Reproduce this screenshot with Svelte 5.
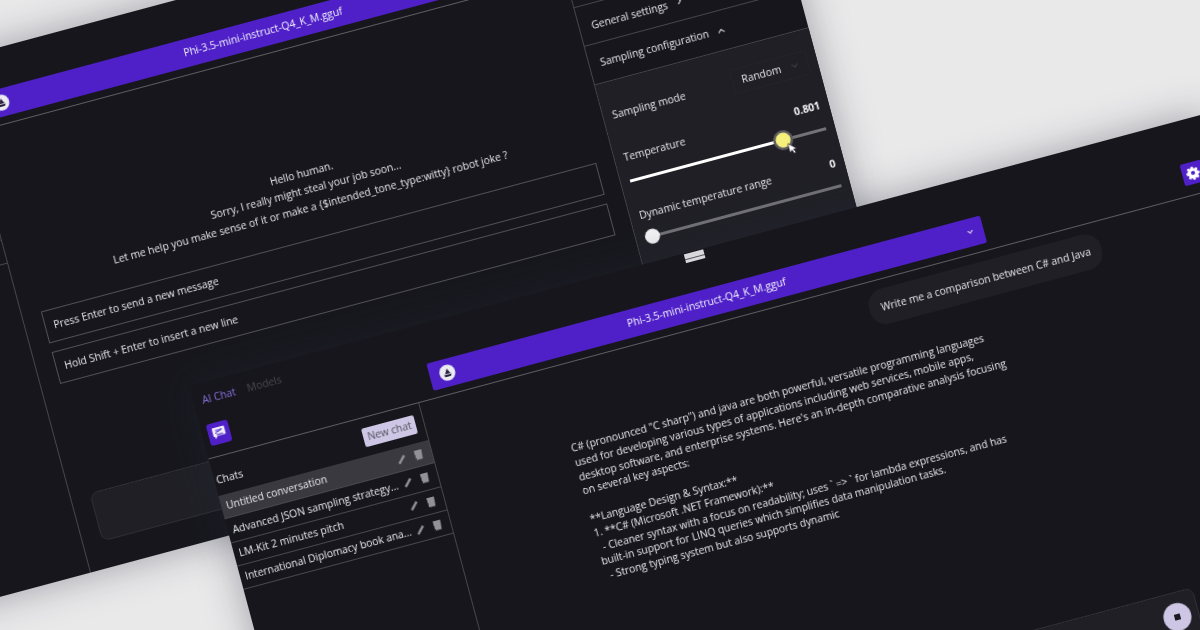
<script lang="ts">
    const MODEL = 'Phi-3.5-mini-instruct-Q4_K_M.gguf';

    const CHATS = [
        { name: 'Untitled conversation', active: true },
        { name: 'Advanced JSON sampling strategy...', active: false },
        { name: 'LM-Kit 2 minutes pitch', active: false },
        { name: 'International Diplomacy book ana...', active: false },
    ];

    const GREETING = [
        'Hello human.',
        'Sorry, I really might steal your job soon...',
        'Let me help you make sense of it or make a {$intended_tone_type:witty} robot joke ?',
    ];

    const ANSWER: [string, boolean?][] = [
        ['C# (pronounced "C sharp") and java are both powerful, versatile programming languages'],
        ['used for developing various types of applications including web services, mobile apps,'],
        ["desktop software, and enterprise systems. Here's an in-depth comparative analysis focusing"],
        ['on several key aspects:'],
        ['\u00a0'],
        ['**Language Design & Syntax:**'],
        ['1. **C# (Microsoft .NET Framework):**'],
        ['- Cleaner syntax with a focus on readability; uses ` => ` for lambda expressions, and has', true],
        ['built-in support for LINQ queries which simplifies data manipulation tasks.'],
        ['- Strong typing system but also supports dynamic', true],
    ];

    const TEMPERATURE = 0.801;
    const DYN_RANGE = 0;
</script>

{#snippet header()}
    <header class="header">
        <div class="brand">
            <nav class="tabs">
                <span class="tab active">AI Chat</span>
                <span class="tab">Models</span>
            </nav>
            <span class="chat-badge">
                <svg width="14" height="13" viewBox="0 0 14 13">
                    <path d="M1.5 1h11a.8.8 0 0 1 .8.8v7a.8.8 0 0 1-.8.8H5L2.2 12.4V10H1.5a.8.8 0 0 1-.8-.8v-7.4A.8.8 0 0 1 1.5 1z" fill="#f0eefa" />
                    <path d="M3 6.6 10.5 3.6M3.6 4h6.4M4 8.2h6.6" stroke="#4f20c8" stroke-width="1" fill="none" />
                </svg>
            </span>
        </div>
        <div class="head-main">
            <div class="model-bar">
                <span class="model-logo">
                    <svg width="10" height="10" viewBox="0 0 10 10">
                        <path d="M5.2 .8 8 6H2.6zM1 6.8h8L7.6 9H2.2z" fill="#2a2140" />
                    </svg>
                </span>
                <span class="model-name">{MODEL}</span>
                <svg class="model-chevron" width="7" height="5" viewBox="0 0 7 5">
                    <path d="M1 1.2 3.5 3.6 6 1.2" fill="none" stroke="#e6e2f8" stroke-width="1.1" />
                </svg>
            </div>
            <button class="gear" aria-label="Settings">
                <svg width="14" height="14" viewBox="0 0 14 14">
                    <path fill="#fff" fill-rule="evenodd" d="M5.9 .8h2.2l.3 1.7 1.1.5 1.4-1 1.6 1.6-1 1.4.5 1.1 1.7.3v2.2l-1.7.3-.5 1.1 1 1.4-1.6 1.6-1.4-1-1.1.5-.3 1.7H5.9l-.3-1.7-1.1-.5-1.4 1-1.6-1.6 1-1.4-.5-1.1-1.7-.3V5.9l1.7-.3.5-1.1-1-1.4 1.6-1.6 1.4 1 1.1-.5zM7 4.9a2.1 2.1 0 1 0 0 4.2 2.1 2.1 0 0 0 0-4.2z" />
                </svg>
            </button>
        </div>
    </header>
{/snippet}

{#snippet sidebar()}
    <aside class="sidebar">
        <div class="side-head">
            <span class="side-title">Chats</span>
            <button class="new-chat">New chat</button>
        </div>
        {#each CHATS as chat}
            <div class="chat-row" class:active={chat.active}>
                <span class="chat-name">{chat.name}</span>
                <svg class="row-icon" width="9" height="10" viewBox="0 0 9 10">
                    <path d="M1.2 8.6 7.8 1.6" fill="none" stroke="#8f8f94" stroke-width="2.4" />
                </svg>
                <svg class="row-icon" width="8" height="11" viewBox="0 0 8 11">
                    <path d="M.2 1h7.6v1.6l-.6 8H.8l-.6-8z" fill="#929296" />
                </svg>
            </div>
        {/each}
    </aside>
{/snippet}

{#snippet slider(value: number, hot: boolean)}
    <div class="slider">
        <div class="track"></div>
        <div class="fill" style="width: calc((100% - 15px) * {value} + 7.5px)"></div>
        <div class="thumb" class:hot style="left: calc((100% - 15px) * {value})"></div>
        {#if hot}
            <svg class="cursor" width="11" height="14" viewBox="0 0 11 14" style="left: calc((100% - 15px) * {value} + 10px)">
                <path d="M1 1v9.6l2.4-2 1.6 3.6 1.9-.8-1.6-3.5h3.2z" fill="#fff" stroke="#23232a" stroke-width=".7" />
            </svg>
        {/if}
    </div>
{/snippet}

<div class="page">
    <section class="window back">
        {@render header()}
        <div class="body">
            {@render sidebar()}
            <div class="main split">
                <div class="chat narrow">
                    <div class="greeting">
                        {#each GREETING as line}
                            <p>{line}</p>
                        {/each}
                    </div>
                    <div class="hint">Press Enter to send a new message</div>
                    <div class="hint">Hold Shift + Enter to insert a new line</div>
                    <div class="prompt"></div>
                </div>
                <aside class="settings">
                    <div class="set-top"></div>
                    <div class="set-row general">
                        <span>General settings</span>
                        <svg width="6" height="8" viewBox="0 0 6 8">
                            <path d="M1.5 1 4.5 4 1.5 7" fill="none" stroke="#c8c8cc" stroke-width="1.1" />
                        </svg>
                    </div>
                    <div class="set-row">
                        <span>Sampling configuration</span>
                        <svg width="8" height="6" viewBox="0 0 8 6">
                            <path d="M1 4.5 4 1.5 7 4.5" fill="none" stroke="#c8c8cc" stroke-width="1.1" />
                        </svg>
                    </div>
                    <div class="set-body">
                        <div class="mode">
                            <span class="mode-label">Sampling mode</span>
                            <div class="select">
                                <span>Random</span>
                                <svg width="8" height="5" viewBox="0 0 8 5">
                                    <path d="M1 1 4 4 7 1" fill="none" stroke="#3c3c43" stroke-width="1.1" />
                                </svg>
                            </div>
                        </div>
                        <div class="param first">
                            <span>Temperature</span>
                            <b>{TEMPERATURE}</b>
                        </div>
                        {@render slider(TEMPERATURE, true)}
                        <div class="param">
                            <span>Dynamic temperature range</span>
                            <b>{DYN_RANGE}</b>
                        </div>
                        {@render slider(DYN_RANGE, false)}
                    </div>
                </aside>
            </div>
        </div>
    </section>

    <section class="window front">
        <div class="grip"></div>
        {@render header()}
        <div class="body">
            {@render sidebar()}
            <div class="main">
                <div class="chat wide">
                    <div class="bubble">Write me a comparison between C# and Java</div>
                    <div class="answer">
                        {#each ANSWER as [line, indent]}
                            <p class:indent>{line}</p>
                        {/each}
                    </div>
                    <div class="prompt">
                        <button class="stop" aria-label="Stop"><i></i></button>
                    </div>
                </div>
            </div>
        </div>
    </section>
</div>

<style>
    :global(body) {
        margin: 0;
        background: #e9e9ea;
        overflow: hidden;
    }

    .page {
        position: relative;
        width: 1200px;
        height: 630px;
        overflow: hidden;
        font-family: "Open Sans", "Liberation Sans", sans-serif;
        font-size: 10.4px;
        line-height: 14.6px;
        color: #e9e9ed;
    }

    p {
        margin: 0;
        white-space: nowrap;
    }

    button {
        font: inherit;
        border: none;
        padding: 0;
    }

    /* windows sit on a free canvas, both tilted the same way */
    .window {
        position: absolute;
        width: 1052px;
        height: 531px;
        display: flex;
        flex-direction: column;
        background: #16161c;
        transform: rotate(-15deg);
        transform-origin: 0 0;
        will-change: transform;
        box-shadow: 0 0 36px rgba(40, 40, 60, 0.38);
    }

    .back {
        left: -256.6px;
        top: 115.8px;
    }

    .front {
        left: 188.5px;
        top: 386px;
    }

    .back .model-name {
        padding-left: 5px;
    }

    .grip {
        position: absolute;
        left: 512px;
        top: 1px;
        width: 20px;
        height: 9px;
        z-index: 2;
        background: linear-gradient(180deg, #d8d8dc 0 2.5px, #55555f 2.5px 3.5px, #d8d8dc 3.5px 5px, #55555f 5px 6px, #d8d8dc 6px);
    }

    .header {
        flex: none;
        height: 76px;
        box-sizing: border-box;
        display: grid;
        grid-template-columns: 218px 1fr;
        border-bottom: 1px solid #5c5c61;
    }

    .brand {
        display: flex;
        flex-direction: column;
        align-items: flex-start;
        padding: 10px 0 0 9px;
    }

    .tabs {
        display: flex;
        gap: 12px;
    }

    .tab {
        color: #4a4853;
    }

    .tab.active {
        color: #8a70dc;
    }

    .chat-badge {
        width: 22px;
        height: 22px;
        margin-top: 17px;
        margin-left: -3px;
        display: flex;
        align-items: center;
        justify-content: center;
        border-radius: 3px;
        background: #4f20c8;
    }

    .head-main {
        display: flex;
        align-items: flex-start;
    }

    .model-bar {
        width: 573px;
        height: 28.5px;
        box-sizing: border-box;
        margin: 39.5px 0 0 17px;
        padding: 0 10px;
        display: grid;
        grid-template-columns: 16px 1fr 16px;
        align-items: center;
        border-radius: 2px;
        background: #4f20c8;
        color: #f6f4fe;
    }

    .model-logo {
        width: 16px;
        height: 16px;
        display: flex;
        align-items: center;
        justify-content: center;
        border-radius: 50%;
        background: #ecebf2;
    }

    .model-name {
        text-align: center;
    }

    .model-chevron {
        justify-self: end;
    }

    .gear {
        width: 22px;
        height: 22px;
        margin: 43px 16px 0 auto;
        display: flex;
        align-items: center;
        justify-content: center;
        border-radius: 2px;
        background: #4f20c8;
    }

    .body {
        flex: 1;
        min-height: 0;
        display: grid;
        grid-template-columns: 218px 1fr;
    }

    .sidebar {
        border-right: 1px solid #45454b;
    }

    .side-head {
        height: 38px;
        box-sizing: border-box;
        padding: 10px 8px 0 2px;
        display: flex;
        justify-content: space-between;
        align-items: flex-start;
    }

    .side-title {
        margin-top: 5px;
    }

    .new-chat {
        width: 54px;
        height: 18.5px;
        border-radius: 2px;
        background: #cdc6e4;
        color: #55535f;
    }

    .chat-row {
        height: 24.3px;
        box-sizing: border-box;
        padding-left: 5px;
        display: flex;
        align-items: center;
        border-bottom: 1px solid #48484e;
    }

    .chat-row.active {
        background: #3a393f;
    }

    .chat-name {
        flex: 1;
        white-space: nowrap;
    }

    .row-icon {
        margin-right: 9px;
    }

    .main {
        min-width: 0;
    }

    .main.split {
        display: grid;
        grid-template-columns: 1fr 222px;
    }

    .chat {
        display: flex;
        flex-direction: column;
        height: 455px;
        box-sizing: border-box;
        padding-bottom: 27px;
    }

    .chat.narrow {
        margin: 0 18px 0 19px;
        padding-top: 115.5px;
    }

    .chat.wide {
        width: 564px;
        margin-left: 135px;
        padding-top: 9px;
    }

    .greeting {
        line-height: 17.5px;
        text-align: center;
        margin-bottom: 22px;
    }

    .hint {
        height: 33px;
        box-sizing: border-box;
        margin-bottom: 9px;
        padding: 0 8px;
        display: flex;
        align-items: center;
        border: 1px solid #505056;
    }

    .prompt {
        height: 50px;
        box-sizing: border-box;
        margin-top: auto;
        padding: 0 7px;
        display: flex;
        align-items: center;
        justify-content: flex-end;
        border: 1px solid #2e2e35;
        border-radius: 8px;
        background: #1f1f25;
    }

    .stop {
        width: 28px;
        height: 28px;
        display: flex;
        align-items: center;
        justify-content: center;
        border-radius: 50%;
        background: #cdc6e4;
    }

    .stop i {
        width: 5.5px;
        height: 5.5px;
        background: #1b1b22;
    }

    .bubble {
        align-self: flex-end;
        width: 240px;
        height: 36px;
        box-sizing: border-box;
        padding-left: 12px;
        display: flex;
        align-items: center;
        white-space: nowrap;
        border-radius: 16px;
        background: #1f1f25;
    }

    .answer {
        margin-top: 31.4px;
        letter-spacing: -0.03px;
    }

    .answer .indent {
        padding-left: 5px;
    }

    .settings {
        border-left: 1px solid #45454b;
        display: flex;
        flex-direction: column;
    }

    .set-top {
        height: 34px;
        border-bottom: 1px solid #45454b;
    }

    .set-row {
        height: 40px;
        box-sizing: border-box;
        padding: 0 11px;
        display: flex;
        align-items: center;
        gap: 9px;
        border-bottom: 1px solid #45454b;
    }

    .set-row.general span {
        margin-top: 3px;
        margin-left: 1px;
    }

    .set-body {
        flex: 1;
        padding: 20px 9px 0;
        background: #1f1f25;
    }

    .mode {
        display: flex;
        align-items: center;
        justify-content: space-between;
    }

    .mode-label {
        margin-top: 2px;
    }

    .select {
        width: 79px;
        height: 25px;
        box-sizing: border-box;
        padding: 0 9px 0 9px;
        display: flex;
        align-items: center;
        justify-content: space-between;
        border: 1px solid #232329;
        border-radius: 2px;
        color: #e9e9ed;
    }

    .param {
        display: flex;
        justify-content: space-between;
        margin-top: 21px;
    }

    .param.first {
        margin-top: 25px;
    }

    .param b {
        color: #f4f4f6;
        font-weight: 700;
    }

    .slider {
        position: relative;
        height: 15px;
        margin-top: 9px;
    }

    .track,
    .fill {
        position: absolute;
        left: 0;
        top: 6px;
        height: 3px;
    }

    .track {
        right: 0;
        background: #727277;
    }

    .fill {
        background: #ffffff;
    }

    .thumb {
        position: absolute;
        top: 0;
        width: 15px;
        height: 15px;
        border-radius: 50%;
        background: #f4f4f6;
    }

    .thumb.hot {
        background: #f5f07c;
        box-shadow: 0 0 0 2.5px #5c5c60;
    }

    .cursor {
        position: absolute;
        top: 11px;
    }
</style>
